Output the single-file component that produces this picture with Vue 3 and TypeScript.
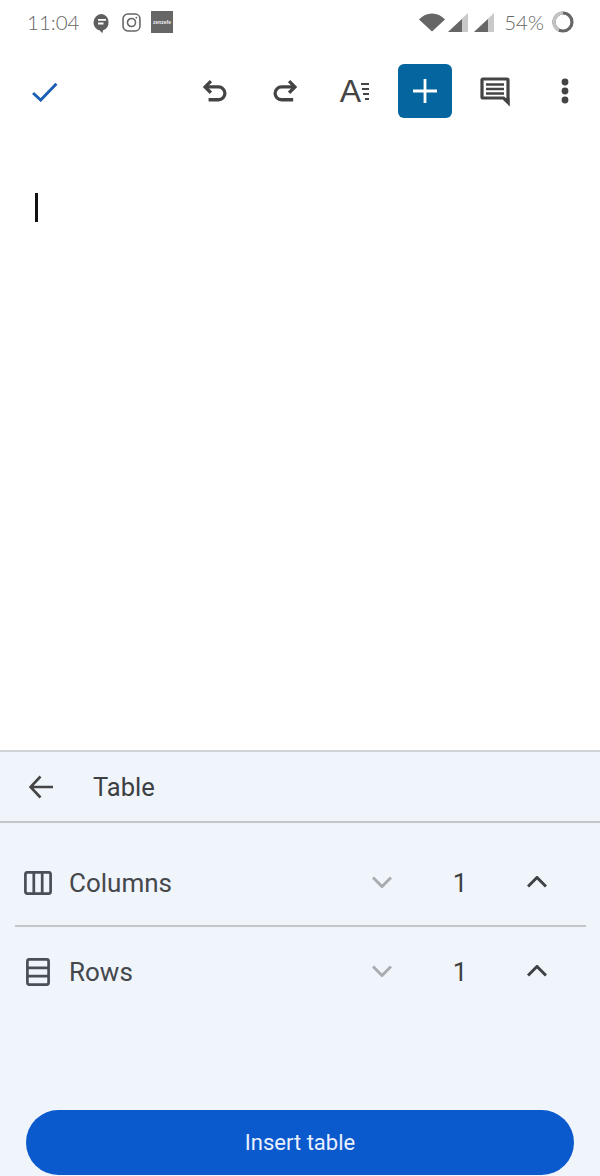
<template>
  <div class="screen">
    <div class="status-bar">
      <span class="time">11:04</span>
      <svg class="st-icon chat" viewBox="0 0 18 20">
        <path d="M9 .5a8.500 8.500 0 0 0-8.500 8.500c0 4 3 7.200 6 7.800l2.800 3 .8-3.100A8.500 8.500 0 0 0 9 .5z" fill="#5f5f5f" />
        <path d="M5 6.400h8M5 10h5.500" stroke="#fff" stroke-width="1.800" fill="none" />
      </svg>
      <svg class="st-icon insta" viewBox="0 0 18 18" fill="none" stroke="#666">
        <rect x="1" y="1" width="16" height="16" rx="4.500" stroke-width="1.500" />
        <circle cx="9" cy="9" r="3.800" stroke-width="1.500" />
        <circle cx="13.600" cy="4.400" r=".8" fill="#666" stroke="none" />
      </svg>
      <div class="zen"><span>zenzefe</span></div>
      <div class="spacer"></div>
      <svg class="wifi" viewBox="0 0 26 19">
        <path d="M0 6.500C3.500 2.500 8 .5 13 .5s9.500 2 13 6L13 18.500z" fill="#666" />
      </svg>
      <svg class="signal first" viewBox="0 0 20 19">
        <path d="M20 0v19H0z" fill="#c9c9c9" />
        <path d="M14 6v13H0z" fill="#666" />
      </svg>
      <svg class="signal second" viewBox="0 0 20 19">
        <path d="M20 0v19H0z" fill="#c9c9c9" />
        <path d="M14 6v13H0z" fill="#666" />
      </svg>
      <span class="battery">54%</span>
      <svg class="ring" viewBox="0 0 22 22" fill="none" stroke-width="3.200">
        <circle cx="11" cy="11" r="9" stroke="#666" />
        <path d="M11 2a9 9 0 0 0-9 9 9 9 0 0 0 5 8" stroke="#c4c4c4" />
      </svg>
    </div>

    <div class="toolbar">
      <div class="check-slot">
        <svg class="check" viewBox="0 0 28 22" fill="none">
          <path d="M2 12.500l8 7.500L26.500 3" stroke="#1a5fb4" stroke-width="3" />
        </svg>
      </div>
      <div class="spacer"></div>
      <div class="slot">
        <svg class="tool" viewBox="0 0 24 24" fill="none" stroke="#444" stroke-width="2.800">
          <path d="M8.500 3.500L3.500 8.500l5 5" />
          <path d="M3.500 8.500H15a5.500 5.500 0 0 1 0 11H6.500" />
        </svg>
      </div>
      <div class="slot">
        <svg class="tool" viewBox="0 0 24 24" fill="none" stroke="#444" stroke-width="2.800">
          <path d="M15.500 3.500l5 5-5 5" />
          <path d="M20.500 8.500H9a5.500 5.500 0 0 0 0 11h10" />
        </svg>
      </div>
      <div class="slot">
        <span class="font-a">A</span>
        <svg class="font-lines" viewBox="0 0 8 20" stroke="#444" stroke-width="2.200">
          <path d="M0 2h8M1 7h7M2 12h6M4 17h4" />
        </svg>
      </div>
      <div class="slot">
        <div class="plus">
          <svg viewBox="0 0 26 26" stroke="#fff" stroke-width="2.800">
            <path d="M13 1v24M1 13h24" />
          </svg>
        </div>
      </div>
      <div class="slot">
        <svg class="comment" viewBox="0 0 30 30" fill="none">
          <path d="M3 2h24a1 1 0 0 1 1 1v22.500l-4.500-4.500H3a1 1 0 0 1-1-1V3a1 1 0 0 1 1-1z" fill="none" stroke="#444" stroke-width="3.200" />
          <path d="M6 7.500h18M6 12h18M6 16.500h18" stroke="#444" stroke-width="2.600" />
          <path d="M24 21h5.500v8.500z" fill="#444" />
        </svg>
      </div>
      <div class="slot">
        <svg class="more" viewBox="0 0 8 26" fill="#444">
          <circle cx="4" cy="4" r="3.400" />
          <circle cx="4" cy="13" r="3.400" />
          <circle cx="4" cy="22" r="3.400" />
        </svg>
      </div>
    </div>

    <div class="doc">
      <div class="cursor"></div>
    </div>

    <div class="panel">
      <div class="panel-head">
        <svg class="back" viewBox="0 0 24 24" fill="none" stroke="#444" stroke-width="2.600">
          <path d="M11.500 1.500L1.500 12l10 10.500M1.500 12H24" />
        </svg>
        <span class="panel-title">Table</span>
      </div>

      <div class="list">
        <div v-for="row in rows" :key="row.label" class="row">
          <svg v-if="row.label === 'Columns'" class="row-icon" viewBox="0 0 28 24" fill="none" stroke="#4a4f55" stroke-width="2.700">
            <rect x="1.400" y="1.400" width="25.200" height="21.200" rx="2" />
            <path d="M9.800 1v22M18.200 1v22" />
          </svg>
          <svg v-else class="row-icon rows-icon" viewBox="0 0 24 28" fill="none" stroke="#4a4f55" stroke-width="2.700">
            <rect x="1.400" y="1.400" width="21.200" height="25.200" rx="2" />
            <path d="M1 9.800h22M1 18.200h22" />
          </svg>
          <span class="row-label">{{ row.label }}</span>
          <div class="spacer"></div>
          <svg class="chev down" viewBox="0 0 20 12" fill="none" stroke="#a9adb2" stroke-width="3">
            <path d="M1 1.500l9 9 9-9" />
          </svg>
          <span class="count">{{ row.value }}</span>
          <svg class="chev up" viewBox="0 0 20 12" fill="none" stroke="#3f4348" stroke-width="3">
            <path d="M1 10.500l9-9 9 9" />
          </svg>
        </div>
      </div>

      <button class="insert">Insert table</button>
    </div>
  </div>
</template>

<script setup lang="ts">
const rows = [
  { label: 'Columns', value: 1 },
  { label: 'Rows', value: 1 }
]
</script>

<style>
html,
body {
  margin: 0;
  background: #fff;
}
</style>

<style scoped>
.screen {
  width: 600px;
  height: 1176px;
  display: flex;
  flex-direction: column;
  overflow: hidden;
  font-family: Roboto, "Liberation Sans", sans-serif;
}
.spacer {
  flex: 1;
}

/* status bar */
.status-bar {
  height: 44px;
  display: flex;
  align-items: center;
  padding: 0 26px 0 27px;
  box-sizing: border-box;
  color: #666;
  font-family: Lato, sans-serif;
  font-size: 20.500px;
  font-weight: 300;
}
.time {
  width: 66px;
}
.st-icon {
  display: block;
}
.chat {
  width: 18px;
  height: 21px;
  margin-right: 11px;
  margin-top: 2px;
}
.insta {
  width: 19px;
  height: 19px;
  margin-right: 10px;
}
.zen {
  width: 22px;
  height: 22px;
  background: #666;
  color: #eee;
  font-size: 5px;
  line-height: 22px;
  text-align: center;
  overflow: hidden;
  white-space: nowrap;
  font-family: "Liberation Sans", sans-serif;
  font-weight: bold;
}
.wifi {
  width: 26px;
  height: 19px;
  margin-right: 3px;
}
.signal {
  width: 20px;
  height: 19px;
}
.signal.first {
  margin-right: 6px;
}
.battery {
  margin-left: 10px;
  margin-right: 8px;
}
.ring {
  width: 22px;
  height: 22px;
}

/* toolbar */
.toolbar {
  height: 94px;
  display: flex;
  align-items: center;
}
.check-slot {
  padding-left: 31px;
}
.check {
  display: block;
  width: 27px;
  height: 21px;
}
.slot {
  width: 70px;
  height: 54px;
  display: flex;
  align-items: center;
  justify-content: center;
}
.tool {
  width: 28px;
  height: 28px;
}
.font-a {
  font-size: 32px;
  color: #444;
  line-height: 1;
  margin-left: -1px;
  font-family: "Liberation Sans", sans-serif;
}
.font-lines {
  width: 8px;
  height: 20px;
  margin-top: 2px;
}
.plus {
  width: 54px;
  height: 54px;
  background: #05669f;
  border-radius: 6px;
  display: flex;
  align-items: center;
  justify-content: center;
}
.plus svg {
  width: 26px;
  height: 26px;
}
.comment {
  width: 30px;
  height: 30px;
  margin-top: 2px;
}
.more {
  width: 8px;
  height: 26px;
}

/* document */
.doc {
  flex: 1;
  padding: 55px 0 0 35px;
}
.cursor {
  width: 3px;
  height: 29px;
  background: #111;
}

/* bottom panel */
.panel {
  height: 426px;
  background: #f0f4fb;
  border-top: 2px solid #d0d3d6;
  box-sizing: border-box;
  display: flex;
  flex-direction: column;
}
.panel-head {
  height: 71px;
  display: flex;
  align-items: center;
  padding-left: 29px;
  border-bottom: 2px solid #c3c6c9;
  box-sizing: border-box;
}
.back {
  width: 24px;
  height: 24px;
}
.panel-title {
  margin-left: 40px;
  font-size: 25.500px;
  color: #3c4043;
}
.list {
  padding: 15px 14px 0 15px;
}
.row {
  height: 89px;
  display: flex;
  align-items: center;
  box-sizing: border-box;
}
.row:first-child {
  border-bottom: 2px solid #c3c6c9;
  padding-top: 2px;
}
.row-icon {
  width: 28px;
  height: 24px;
  margin-left: 9px;
}
.rows-icon {
  width: 24px;
  height: 28px;
  margin-left: 11px;
  margin-right: 2px;
}
.row-label {
  margin-left: 17px;
  font-size: 26px;
  color: #44484d;
}
.chev {
  width: 20px;
  height: 12px;
  margin-top: -2px;
}
.count {
  width: 20px;
  margin: 0 57px;
  text-align: center;
  font-size: 26px;
  color: #3c4043;
}
.down {
  margin-right: 1px;
}
.up {
  margin-right: 39px;
}
.insert {
  margin: auto 26px 1px;
  height: 65px;
  border: none;
  border-radius: 33px;
  background: #0a59cd;
  color: #e8f0fe;
  font-family: Roboto, sans-serif;
  font-size: 22px;
  font-weight: 400;
}
</style>
